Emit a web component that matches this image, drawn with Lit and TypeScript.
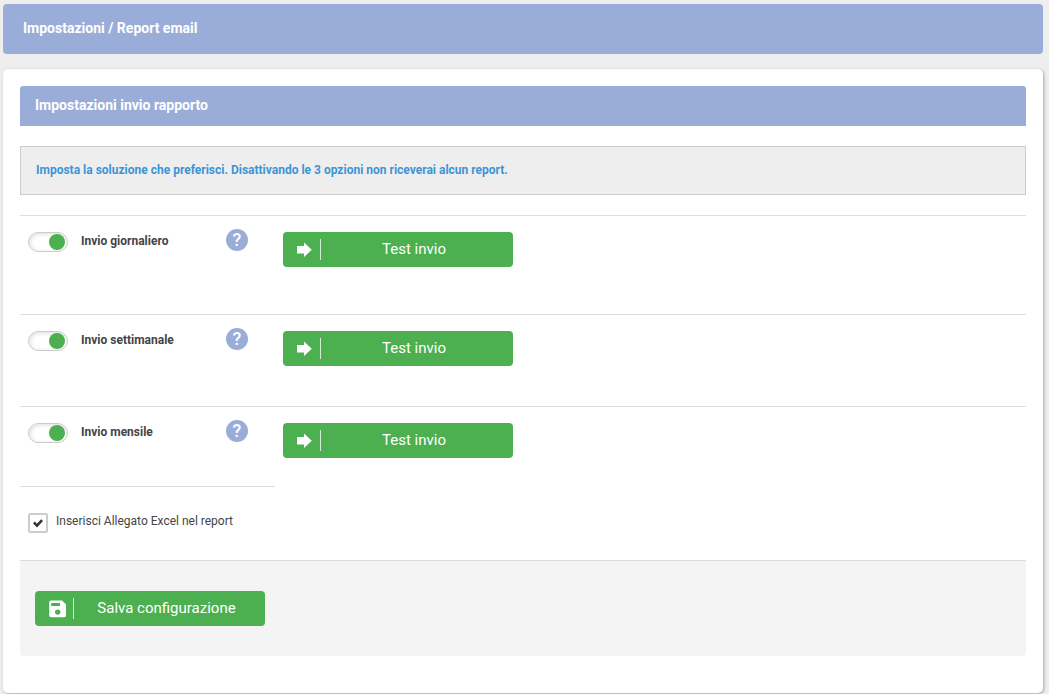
import { LitElement, html, css, svg } from "lit";
import { customElement, property, state } from "lit/decorators.js";

const arrowIcon = svg`<path d="M1 5H8V1.5L15.8 8.8L8 16V12.5H1Z" fill="currentColor"/>`;
const saveIcon = svg`<path fill-rule="evenodd" fill="currentColor" d="M3 0.5H14L18 4.5V15.5Q18 17.3 16.2 17.3H3Q1.2 17.3 1.2 15.5V2.3Q1.2 0.5 3 0.5ZM3.2 3V6H12V3ZM9.7 9.4A2.7 2.7 0 1 0 9.7 14.8A2.7 2.7 0 1 0 9.7 9.4Z"/>`;

@customElement("action-button")
class ActionButton extends LitElement {
  @property() icon = "arrow";
  @property() label = "";

  static styles = css`
    :host {
      display: block;
      width: 230px;
    }
    .button {
      display: flex;
      align-items: center;
      width: 100%;
      height: 35px;
      padding: 0;
      border: 0;
      border-radius: 4px;
      background: #4caf50;
      color: #fff;
      font: 400 15px/20px Roboto, sans-serif;
      cursor: pointer;
    }
    .button:hover {
      background: #449d48;
    }
    .icon {
      display: flex;
      align-items: center;
      box-sizing: border-box;
      width: 38px;
      height: 21px;
      padding-left: 13px;
      border-right: 1px solid rgba(255, 255, 255, 0.75);
    }
    .icon.save {
      width: 39px;
    }
    .text {
      flex: 1;
      padding: 0 6px 2px 0;
      text-align: center;
    }
  `;

  render() {
    return html`<button class="button" type="button">
      <span class="icon ${this.icon}">
        <svg width="18" height="18" viewBox="0 0 18 18" aria-hidden="true">
          ${this.icon === "save" ? saveIcon : arrowIcon}
        </svg>
      </span>
      <span class="text">${this.label}</span>
    </button>`;
  }
}

interface Frequency {
  id: string;
  label: string;
  enabled: boolean;
}

@customElement("app-root")
class AppRoot extends LitElement {
  @state() frequencies: Frequency[] = [
    { id: "daily", label: "Invio giornaliero", enabled: true },
    { id: "weekly", label: "Invio settimanale", enabled: true },
    { id: "monthly", label: "Invio mensile", enabled: true },
  ];

  static styles = css`
    :host {
      display: block;
      box-sizing: border-box;
      min-height: 100vh;
      padding: 4px 6px 1px 3px;
      background: #eee;
      color: #444;
      font: 400 12px/18px Roboto, sans-serif;
    }
    .page-title {
      margin: 0 0 15px;
      padding: 14px 20px 16px;
      border-radius: 4px;
      background: #9aadd8;
      color: #fff;
      font-size: 14px;
      font-weight: 700;
      line-height: 20px;
    }
    .card {
      padding: 17px 17px 37px;
      border-radius: 5px;
      background: #fff;
      box-shadow: 1px 1px 3px rgba(0, 0, 0, 0.3);
    }
    .card-title {
      margin: 0 0 20px;
      padding: 9px 15px 11px;
      border-radius: 3px 3px 0 0;
      background: #9aadd8;
      color: #fff;
      font-size: 14px;
      font-weight: 700;
      line-height: 20px;
    }
    .note {
      margin: 0 0 20px;
      padding: 14px 15px 15px;
      border: 1px solid #ccc;
      background: #eee;
      color: #3d94d6;
      font-weight: 700;
    }
    .row {
      display: flex;
      align-items: flex-start;
      box-sizing: border-box;
      min-height: 80px;
      padding: 13px 8px 0;
      border-top: 1px solid #ddd;
    }
    .row.daily {
      min-height: 99px;
    }
    .row.weekly {
      min-height: 92px;
    }
    .switch {
      appearance: none;
      display: flex;
      align-items: center;
      box-sizing: border-box;
      width: 40px;
      height: 20px;
      margin: 3px 13px 0 0;
      padding: 0 2px;
      border: 1px solid #ccc;
      border-radius: 10px;
      background: #fff;
      box-shadow: inset 1px 1px 4px rgba(0, 0, 0, 0.14);
      cursor: pointer;
    }
    .switch::before {
      content: "";
      width: 16px;
      height: 16px;
      border-radius: 50%;
      background: #bbb;
    }
    .switch:checked {
      justify-content: flex-end;
    }
    .switch:checked::before {
      background: #4caf50;
    }
    .label {
      width: 145px;
      padding-top: 3px;
      font-weight: 700;
    }
    .help {
      width: 22px;
      height: 22px;
      margin-right: 35px;
      padding: 0;
      border: 0;
      border-radius: 50%;
      background: #9aadd8;
      color: #fff;
      font: 500 18px/22px Roboto, sans-serif;
      text-align: center;
      cursor: pointer;
    }
    .test {
      margin-top: 3px;
    }
    .attachment {
      display: flex;
      align-items: flex-start;
      box-sizing: border-box;
      width: 255px;
      height: 74px;
      padding: 25px 0 0 8px;
      border-top: 1px solid #ddd;
    }
    .check {
      appearance: none;
      box-sizing: border-box;
      width: 20px;
      height: 20px;
      margin: 1px 8px 0 0;
      border: 2px solid #ccc;
      border-radius: 2px;
      background: #fff;
      display: grid;
      place-content: center;
      cursor: pointer;
    }
    .check:checked::before {
      content: "";
      width: 10px;
      height: 10px;
      background: #333;
      clip-path: polygon(0 53%, 18% 36%, 39% 58%, 82% 12%, 100% 29%, 40% 96%);
    }
    .footer {
      padding: 30px 15px;
      border-top: 1px solid #ddd;
      border-radius: 0 0 4px 4px;
      background: #f4f4f4;
    }
  `;

  toggle(id: string) {
    this.frequencies = this.frequencies.map((f) =>
      f.id === id ? { ...f, enabled: !f.enabled } : f
    );
  }

  render() {
    return html`
      <h1 class="page-title">Impostazioni / Report email</h1>
      <main class="card">
        <h2 class="card-title">Impostazioni invio rapporto</h2>
        <p class="note">
          Imposta la soluzione che preferisci. Disattivando le 3 opzioni non riceverai alcun report.
        </p>
        ${this.frequencies.map(
          (f) => html`<div class="row ${f.id}">
            <input
              class="switch"
              type="checkbox"
              role="switch"
              id=${f.id}
              .checked=${f.enabled}
              @change=${() => this.toggle(f.id)}
            />
            <label class="label" for=${f.id}>${f.label}</label>
            <button class="help" type="button">?</button>
            <action-button class="test" label="Test invio"></action-button>
          </div>`
        )}
        <div class="attachment">
          <input class="check" type="checkbox" id="excel" checked />
          <label for="excel">Inserisci Allegato Excel nel report</label>
        </div>
        <div class="footer">
          <action-button icon="save" label="Salva configurazione"></action-button>
        </div>
      </main>
    `;
  }
}
